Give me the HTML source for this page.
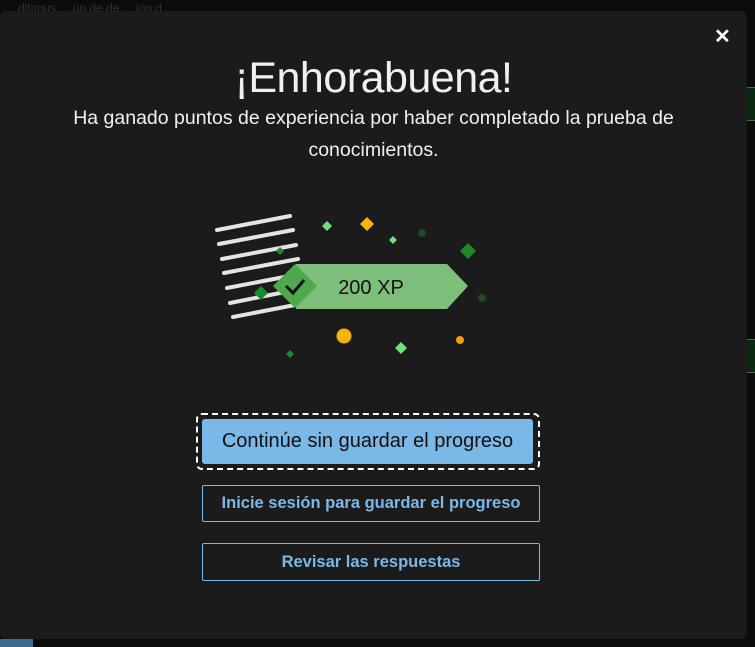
<!DOCTYPE html>
<html><head><meta charset="utf-8"><style>
*{margin:0;padding:0;box-sizing:border-box}
body{width:755px;height:647px;background:#0b0b0b;position:relative;overflow:hidden;font-family:"Liberation Sans",sans-serif}
.modal{position:absolute;left:0;top:11px;width:747px;height:628px;background:#1b1b1b;border-radius:6px}
.g{position:absolute;left:747px;width:8px;height:34px;background:#0a2a10;border-top:1px solid #4a6a4a;border-bottom:1px solid #4a6a4a}
.t{position:absolute;left:0;width:747px;text-align:center;color:#f0f0f0}
.btn{position:absolute;display:flex;align-items:center;justify-content:center;font-weight:bold;}
</style></head><body>
<div style="position:absolute;left:18px;top:1px;color:#333;font-size:12px">ditimus ... ún de de ... ión d ..</div>
<div class="g" style="top:87px"></div>
<div class="g" style="top:339px"></div>
<div style="position:absolute;left:0;top:639px;width:33px;height:8px;background:#3f6b8f"></div>
<div class="modal"></div>
<div style="position:absolute;left:714px;top:24px;color:#fff;font-size:20px;font-weight:bold">✕</div>
<div class="t" style="top:54px;font-size:43px;font-weight:300;letter-spacing:-0.5px">¡Enhorabuena!</div>
<div class="t" style="top:102px;font-size:19.5px;line-height:32px">Ha ganado puntos de experiencia por haber completado la prueba de<br>conocimientos.</div>
<svg style="position:absolute;left:0;top:0" width="755" height="647">
<g stroke="#e4e4e4" stroke-width="4" stroke-linecap="round">
<line x1="217" y1="230" x2="290" y2="216"/>
<line x1="219" y1="244" x2="293" y2="230"/>
<line x1="222" y1="259" x2="296" y2="245"/>
<line x1="224" y1="273" x2="298" y2="259"/>
<line x1="227" y1="288" x2="300" y2="274"/>
<line x1="230" y1="303" x2="300" y2="289"/>
<line x1="233" y1="317" x2="300" y2="304"/>
</g>
<polygon points="296,264 447,264 468,286 447,309 296,309" fill="#7dbf7a"/>
<polygon points="295,264 317,286 295,308 273,286" fill="#4ea94e"/>
<path d="M286 286 L293 293 L304 280" stroke="#111" stroke-width="3" fill="none"/>
<text x="371" y="294" font-size="20" fill="#111" text-anchor="middle" font-family="Liberation Sans">200 XP</text>
<g>
<polygon points="327,221 332,226 327,231 322,226" fill="#6fe07a"/>
<polygon points="367,217 374,224 367,231 360,224" fill="#f5b400"/>
<polygon points="393,236 397,240 393,244 389,240" fill="#6fe07a"/>
<circle cx="422" cy="233" r="4" fill="#1e4a25"/>
<polygon points="468,243 476,251 468,259 460,251" fill="#1a8a2a"/>
<circle cx="482" cy="298" r="4" fill="#1e4a25"/>
<polygon points="280,247 284,251 280,255 276,251" fill="#1a8a2a"/>
<polygon points="261,286 268,293 261,300 254,293" fill="#1a8a2a"/>
<circle cx="344" cy="336" r="7.5" fill="#f5b400"/>
<polygon points="401,342 407,348 401,354 395,348" fill="#6fe07a"/>
<circle cx="460" cy="340" r="4" fill="#f59e0b"/>
<polygon points="290,350 294,354 290,358 286,354" fill="#1a8a2a"/>
</g>
</svg>
<div style="position:absolute;left:196px;top:413px;width:344px;height:57px;border:2px dashed #fff;border-radius:6px"></div>
<div class="btn" style="left:202px;top:419px;width:331px;height:45px;background:#7ab8e8;border-radius:3px;color:#111;font-size:20px;font-weight:normal">Continúe sin guardar el progreso</div>
<div class="btn" style="left:202px;top:485px;width:338px;height:37px;border:1px solid #7ab8e8;border-radius:2px;color:#7ab8e8;font-size:16.5px">Inicie sesión para guardar el progreso</div>
<div class="btn" style="left:202px;top:543px;width:338px;height:38px;border:1px solid #7ab8e8;border-radius:2px;color:#7ab8e8;font-size:16.5px">Revisar las respuestas</div>
</body></html>
